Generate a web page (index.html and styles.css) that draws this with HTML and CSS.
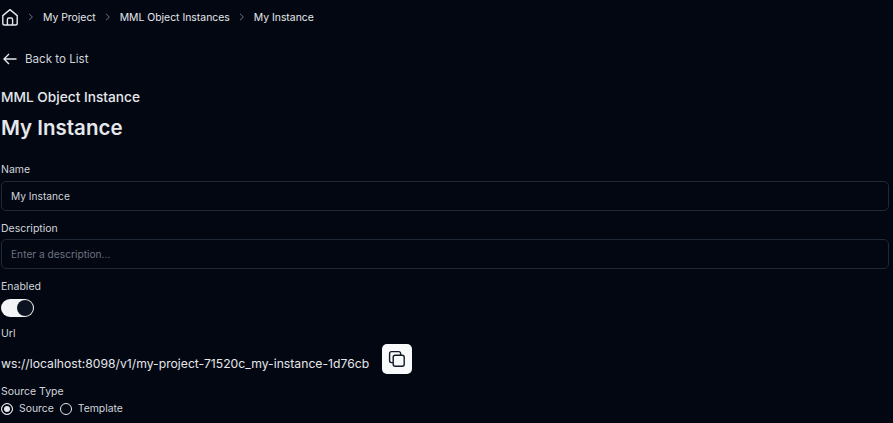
FILE: index.html
```html
<!DOCTYPE html>
<html lang="en">
<head>
    <meta charset="UTF-8">
    <title>My Instance</title>
    <link rel="stylesheet" href="styles.css">
</head>
<body>
    <nav class="crumbs">
        <svg class="home" width="18" height="18" viewBox="0 0 18 18" fill="none" stroke="#e5e7eb" stroke-width="1.4" stroke-linejoin="round">
            <path d="M1.8 7.6 9 1.6l7.2 6v7.6a1.8 1.8 0 0 1-1.8 1.8H3.6a1.8 1.8 0 0 1-1.8-1.8z"/>
            <path d="M6.4 17v-5.6a1.4 1.4 0 0 1 1.4-1.4h2.4a1.4 1.4 0 0 1 1.4 1.4V17"/>
        </svg>
        <svg class="chev" width="6" height="8" viewBox="0 0 6 8" fill="none" stroke="#6b7280"><path d="M1 .8 4.4 4 1 7.2"/></svg>
        <span>My Project</span>
        <svg class="chev" width="6" height="8" viewBox="0 0 6 8" fill="none" stroke="#6b7280"><path d="M1 .8 4.4 4 1 7.2"/></svg>
        <span>MML Object Instances</span>
        <svg class="chev" width="6" height="8" viewBox="0 0 6 8" fill="none" stroke="#6b7280"><path d="M1 .8 4.4 4 1 7.2"/></svg>
        <span>My Instance</span>
    </nav>

    <a class="back">
        <svg width="14" height="12" viewBox="0 0 14 12" fill="none" stroke="#e5e7eb" stroke-width="1.4"><path d="M13.5 6H1M6 1 1 6l5 5"/></svg>
        Back to List
    </a>

    <div class="kind">MML Object Instance</div>
    <h1>My Instance</h1>

    <label class="lbl lbl-name">Name</label>
    <div class="field">My Instance</div>

    <label class="lbl lbl-desc">Description</label>
    <div class="field empty">Enter a description...</div>

    <label class="lbl lbl-enabled">Enabled</label>
    <div class="toggle"><span class="knob"></span></div>

    <label class="lbl lbl-url">Url</label>
    <div class="url-row">
        <span class="url">ws://localhost:8098/v1/my-project-71520c_my-instance-1d76cb</span>
        <button class="copy">
            <svg width="18" height="18" viewBox="0 0 18 18" fill="none" stroke="#111827" stroke-width="1.4">
                <rect x="5.2" y="5.2" width="11" height="11" rx="2"/>
                <path d="M12.6 5V3.4a1.8 1.8 0 0 0-1.8-1.8H3.4a1.8 1.8 0 0 0-1.8 1.8v7.4a1.8 1.8 0 0 0 1.8 1.8H5"/>
            </svg>
        </button>
    </div>

    <label class="lbl lbl-type">Source Type</label>
    <div class="radios">
        <span class="radio on"></span><span>Source</span>
        <span class="radio second"></span><span>Template</span>
    </div>
</body>
</html>
```

FILE: styles.css
```css
html, body { height: 100%; overflow: hidden; }
body { margin: 0; padding: 0 1px; background: #030712; color: #e5e7eb; font-family: Inter, sans-serif; font-size: 11px; }

.crumbs { display: flex; align-items: center; height: 18px; padding-top: 8px; color: #e5e7eb; font-size: 10.4px; }
.crumbs .home { margin-right: 9px; }
.crumbs .chev { margin-right: 9px; }
.crumbs span { margin-right: 9px; }

.back { display: flex; align-items: center; gap: 8px; margin: 24px 0 0 2px; height: 18px; font-size: 11.6px; color: #d1d5db; }

.kind { margin-top: 19px; font-size: 13.7px; line-height: 20px; font-weight: 500; color: #e5e7eb; }
h1 { margin: 7px 0 0; font-size: 20.5px; line-height: 28px; font-weight: 600; color: #e5e7eb; }

.lbl { display: block; font-size: 10.5px; line-height: 14px; color: #d1d5db; }
.lbl-name { margin-top: 21px; }
.lbl-desc { margin-top: 11px; }
.lbl-enabled { margin-top: 11px; }
.lbl-url { margin-top: 10px; }
.lbl-type { margin-top: 11px; }

.field { box-sizing: border-box; height: 30px; margin-top: 4px; margin-right: 3px; padding: 0 9px; display: flex; align-items: center; border: 1px solid #1f2937; border-radius: 5px; font-size: 10.2px; color: #d1d5db; }
.field.empty { margin-top: 3px; color: #6b7280; }

.toggle { display: flex; justify-content: flex-end; align-items: center; box-sizing: border-box; width: 33px; height: 18px; margin-top: 5px; padding: 0 1px; background: #f3f4f6; border-radius: 9px; }
.knob { width: 16px; height: 16px; border-radius: 50%; background: #0b1220; }

.url-row { display: flex; align-items: center; gap: 13px; margin-top: 3px; }
.url { padding-top: 8px; font-size: 12.2px; color: #e5e7eb; }
.copy { display: flex; align-items: center; justify-content: center; width: 30px; height: 30px; padding: 0; background: #f9fafb; border: none; border-radius: 5px; }

.radios { display: flex; align-items: center; margin-top: 3px; font-size: 10.4px; color: #d1d5db; }
.radio { box-sizing: border-box; width: 12px; height: 12px; margin-right: 6px; border: 1px solid #e5e7eb; border-radius: 50%; }
.radio.on { background: #e5e7eb; box-shadow: inset 0 0 0 2px #030712; }
.radio.second { margin-left: 6px; }
```
